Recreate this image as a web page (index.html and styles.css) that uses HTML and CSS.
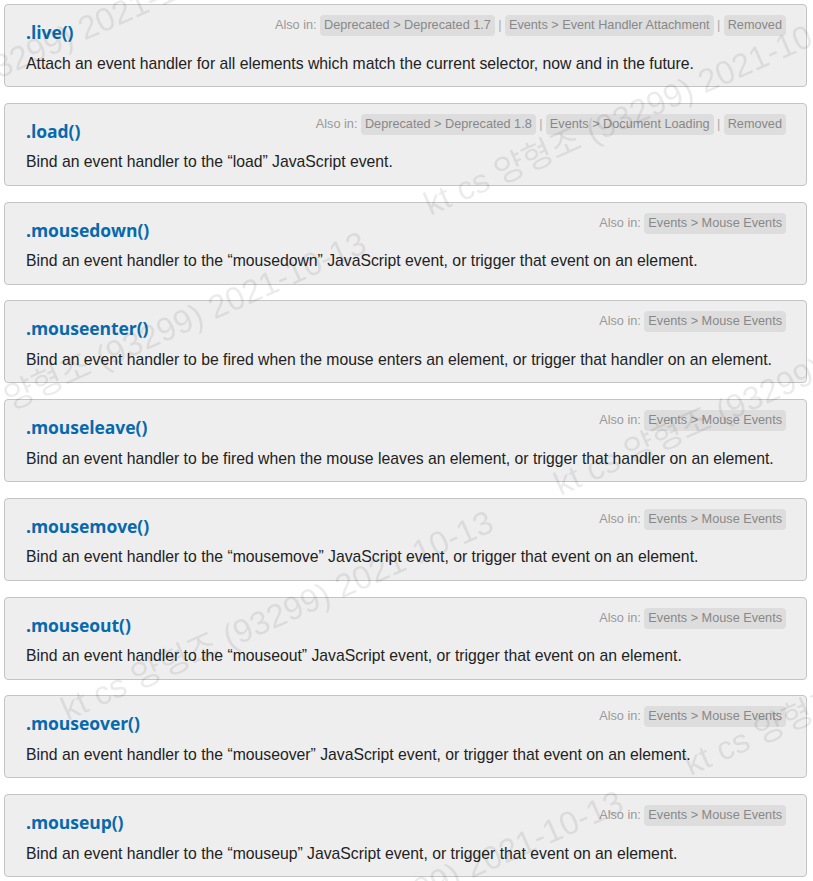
FILE: index.html
```html
<!DOCTYPE html>
<html lang="en">
<head>
<meta charset="utf-8">
<title>Events</title>
<link rel="stylesheet" href="styles.css">
</head>
<body>
<ul class="entries">
  <li class="entry">
    <div class="also-in">Also in: <span class="tag">Deprecated &gt; Deprecated 1.7</span><span class="sep">|</span><span class="tag">Events &gt; Event Handler Attachment</span><span class="sep">|</span><span class="tag">Removed</span></div>
    <h2 class="entry-title">.live()</h2>
    <p class="entry-desc">Attach an event handler for all elements which match the current selector, now and in the future.</p>
  </li>
  <li class="entry">
    <div class="also-in">Also in: <span class="tag">Deprecated &gt; Deprecated 1.8</span><span class="sep">|</span><span class="tag">Events &gt; Document Loading</span><span class="sep">|</span><span class="tag">Removed</span></div>
    <h2 class="entry-title">.load()</h2>
    <p class="entry-desc">Bind an event handler to the “load” JavaScript event.</p>
  </li>
  <li class="entry">
    <div class="also-in">Also in: <span class="tag">Events &gt; Mouse Events</span></div>
    <h2 class="entry-title">.mousedown()</h2>
    <p class="entry-desc">Bind an event handler to the “mousedown” JavaScript event, or trigger that event on an element.</p>
  </li>
  <li class="entry">
    <div class="also-in">Also in: <span class="tag">Events &gt; Mouse Events</span></div>
    <h2 class="entry-title">.mouseenter()</h2>
    <p class="entry-desc">Bind an event handler to be fired when the mouse enters an element, or trigger that handler on an element.</p>
  </li>
  <li class="entry">
    <div class="also-in">Also in: <span class="tag">Events &gt; Mouse Events</span></div>
    <h2 class="entry-title">.mouseleave()</h2>
    <p class="entry-desc">Bind an event handler to be fired when the mouse leaves an element, or trigger that handler on an element.</p>
  </li>
  <li class="entry">
    <div class="also-in">Also in: <span class="tag">Events &gt; Mouse Events</span></div>
    <h2 class="entry-title">.mousemove()</h2>
    <p class="entry-desc">Bind an event handler to the “mousemove” JavaScript event, or trigger that event on an element.</p>
  </li>
  <li class="entry">
    <div class="also-in">Also in: <span class="tag">Events &gt; Mouse Events</span></div>
    <h2 class="entry-title">.mouseout()</h2>
    <p class="entry-desc">Bind an event handler to the “mouseout” JavaScript event, or trigger that event on an element.</p>
  </li>
  <li class="entry">
    <div class="also-in">Also in: <span class="tag">Events &gt; Mouse Events</span></div>
    <h2 class="entry-title">.mouseover()</h2>
    <p class="entry-desc">Bind an event handler to the “mouseover” JavaScript event, or trigger that event on an element.</p>
  </li>
  <li class="entry">
    <div class="also-in">Also in: <span class="tag">Events &gt; Mouse Events</span></div>
    <h2 class="entry-title">.mouseup()</h2>
    <p class="entry-desc">Bind an event handler to the “mouseup” JavaScript event, or trigger that event on an element.</p>
  </li>
</ul>
<div class="watermarks" aria-hidden="true">
  <span class="wm wm1">kt cs 양형조 (93299) 2021-10-13</span>
  <span class="wm wm2">kt cs 양형조 (93299) 2021-10-13</span>
  <span class="wm wm3">kt cs 양형조 (93299) 2021-10-13</span>
  <span class="wm wm4">kt cs 양형조 (93299) 2021-10-13</span>
  <span class="wm wm5">kt cs 양형조 (93299) 2021-10-13</span>
  <span class="wm wm6">kt cs 양형조 (93299) 2021-10-13</span>
  <span class="wm wm7">kt cs 양형조 (93299) 2021-10-13</span>
</div>
</body>
</html>
```
FILE: styles.css
```css
html, body {
  margin: 0;
  padding: 0;
  background: #ffffff;
}

body {
  font-family: "Liberation Sans", Arial, sans-serif;
  color: #222222;
}

.entries {
  list-style: none;
  margin: 0;
  padding: 4px 6px 0 4px;
  display: flex;
  flex-direction: column;
  gap: 15.75px;
}

.entry {
  background: #eeeeee;
  border: 1px solid #c4c4c4;
  border-radius: 4px;
  padding: 10px 20px 10.5px 21px;
}

.also-in {
  float: right;
  font-size: 12.7px;
  line-height: 21px;
  color: #999999;
}

.tag {
  display: inline-block;
  background: #dddddd;
  color: #888888;
  border-radius: 4px;
  padding: 0 4px;
  line-height: 21px;
}

.sep {
  display: inline-block;
  margin: 0 3.4px;
  color: #aaaaaa;
}

.entry-title {
  margin: 5px 0 0;
  font-family: "Open Sans", "Noto Sans", sans-serif;
  font-weight: 700;
  font-size: 17.5px;
  line-height: 24px;
  color: #0769ad;
  letter-spacing: -0.05px;
}

.entry-desc {
  margin: 7.5px 0 0;
  font-size: 15.75px;
  line-height: 24px;
  color: #222222;
}

.watermarks {
  position: fixed;
  inset: 0;
  overflow: hidden;
  pointer-events: none;
}

.wm {
  position: absolute;
  white-space: nowrap;
  font-family: "Liberation Sans", "Noto Sans CJK KR", sans-serif;
  font-size: 33px;
  line-height: 33px;
  color: rgba(0, 0, 0, 0.08);
  transform-origin: 0 27.4px;
  transform: rotate(-24deg);
}

.wm1 { left: -190px; top: 135px; }
.wm2 { left: 430px; top: 188px; }
.wm3 { left: -60px; top: 414px; }
.wm4 { left: 560px; top: 468px; }
.wm5 { left: 67px; top: 693px; }
.wm6 { left: 690px; top: 748px; }
.wm7 { left: 197px; top: 973px; }
```
